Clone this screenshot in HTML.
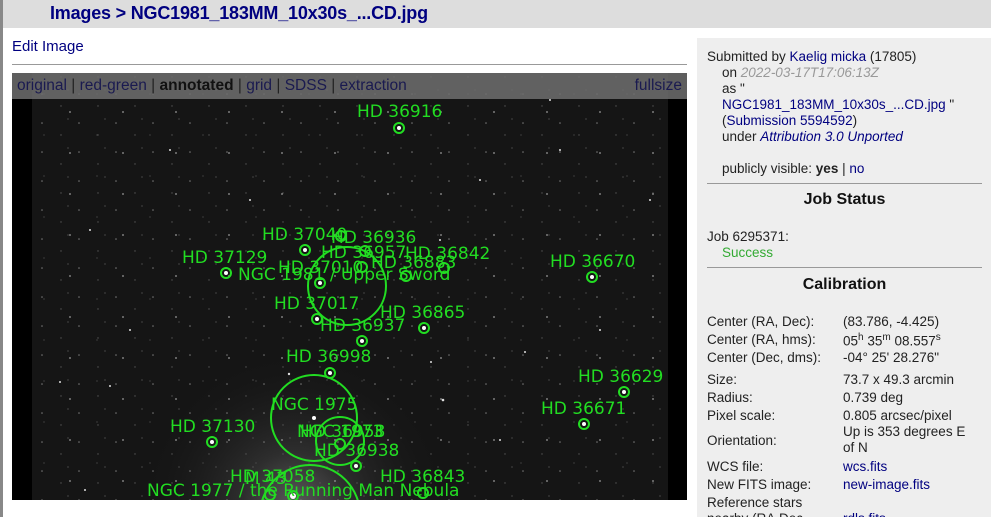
<!DOCTYPE html>
<html><head><meta charset="utf-8"><style>
body{margin:0;width:991px;height:517px;overflow:hidden;background:#fff;font-family:"Liberation Sans",Arial,sans-serif;position:relative}
.lb{position:absolute;left:0;top:0;width:3px;height:517px;background:#888}
.hdr{position:absolute;left:3px;top:0;width:988px;height:28px;background:#ddd}
.hdr span{position:absolute;left:47px;top:3px;font-size:18px;font-weight:bold;color:#000080;letter-spacing:-0.2px}
.edit{position:absolute;left:12px;top:38px;font-size:15px;color:#000080}
.hr{position:absolute;left:12px;top:64px;width:675px;height:1px;background:#999}
.img{position:absolute;left:12px;top:73px;width:675px;height:427px;background:#000;overflow:hidden}
.tb{position:absolute;left:12px;top:73px;width:675px;height:26px;background:rgba(110,110,110,0.85);font-size:15.5px;color:#1a1a50;line-height:26px}
.tb .l{position:absolute;left:5px}
.tb .r{position:absolute;right:5px}
.tb b{color:#111}
.tb i{font-style:normal;color:#222}
.panel{position:absolute;left:697px;top:38px;width:294px;height:479px;background:#eee;font-size:13.5px;color:#222;overflow:hidden}
.panel a{color:#000080}
.t{position:absolute;white-space:nowrap}
.ph{position:absolute;left:10px;width:275px;height:1px;background:#999}
.h{position:absolute;left:10px;width:275px;text-align:center;font-weight:bold;font-size:16px;color:#111}
</style></head><body>
<div class="lb"></div>
<div class="hdr"><span>Images &gt; NGC1981_183MM_10x30s_...CD.jpg</span></div>
<div class="edit">Edit Image</div>
<div class="hr"></div>
<div class="img">
<svg width="675" height="427" viewBox="12 73 675 427" xmlns="http://www.w3.org/2000/svg">
<defs>
<radialGradient id="g1" cx="295" cy="505" r="150" gradientUnits="userSpaceOnUse"><stop offset="0" stop-color="#5a5a5a"/><stop offset="0.35" stop-color="#2e2e2e"/><stop offset="1" stop-color="#181818" stop-opacity="0"/></radialGradient>
<pattern id="st" width="37" height="29" patternUnits="userSpaceOnUse"><circle cx="5" cy="7" r="0.8" fill="#777"/><circle cx="24" cy="19" r="0.7" fill="#555"/><circle cx="31" cy="3" r="0.6" fill="#666"/></pattern>
<pattern id="st2" width="53" height="41" patternUnits="userSpaceOnUse"><circle cx="17" cy="30" r="0.9" fill="#999"/><circle cx="44" cy="12" r="0.6" fill="#555"/></pattern>
</defs>
<rect x="32" y="73" width="636" height="427" fill="#151515"/>
<rect x="32" y="73" width="636" height="427" fill="url(#g1)"/>
<rect x="32" y="73" width="636" height="427" fill="url(#st)"/>
<rect x="32" y="73" width="636" height="427" fill="url(#st2)"/>
<g fill="#ddd">
<circle cx="60" cy="382" r="1"/><circle cx="110" cy="386" r="1"/><circle cx="170" cy="150" r="1"/><circle cx="480" cy="180" r="1"/><circle cx="560" cy="150" r="1"/><circle cx="600" cy="330" r="1"/><circle cx="431" cy="362" r="1"/><circle cx="90" cy="230" r="1"/><circle cx="250" cy="200" r="1"/><circle cx="650" cy="200" r="1"/><circle cx="525" cy="352" r="1"/><circle cx="440" cy="240" r="1"/><circle cx="130" cy="330" r="1"/><circle cx="500" cy="440" r="1"/><circle cx="85" cy="490" r="1"/><circle cx="443" cy="400" r="1.3"/><circle cx="289" cy="374" r="1.2"/><circle cx="550" cy="100" r="1"/>
</g>
<g fill="#fff">
<circle cx="399" cy="128" r="2"/><circle cx="305" cy="250" r="2"/><circle cx="226" cy="273" r="2"/><circle cx="320" cy="283" r="2"/><circle cx="592" cy="277" r="2"/><circle cx="317" cy="319" r="2"/><circle cx="424" cy="328" r="2"/><circle cx="362" cy="341" r="2"/><circle cx="330" cy="373" r="2"/><circle cx="624" cy="392" r="2"/><circle cx="584" cy="424" r="2"/><circle cx="212" cy="442" r="2"/><circle cx="356" cy="466" r="2"/><circle cx="293" cy="496" r="3"/><circle cx="314" cy="418" r="2"/>
</g>
<g fill="none" stroke="#22dd22" stroke-width="2">
<circle cx="399" cy="128" r="5"/><circle cx="305" cy="250" r="5"/><circle cx="341" cy="236" r="5"/><circle cx="365" cy="251" r="5"/><circle cx="444" cy="268" r="5"/><circle cx="226" cy="273" r="5"/><circle cx="362" cy="267" r="5"/><circle cx="406" cy="276" r="5"/><circle cx="320" cy="283" r="5"/><circle cx="347" cy="286" r="39"/><circle cx="592" cy="277" r="5"/><circle cx="317" cy="319" r="5"/><circle cx="424" cy="328" r="5"/><circle cx="362" cy="341" r="5"/><circle cx="330" cy="373" r="5"/><circle cx="624" cy="392" r="5"/><circle cx="584" cy="424" r="5"/><circle cx="314" cy="418" r="43"/><circle cx="340" cy="441" r="24"/><circle cx="212" cy="442" r="5"/><circle cx="340" cy="444" r="5"/><circle cx="356" cy="466" r="5"/><circle cx="310" cy="515" r="50"/><circle cx="270" cy="495" r="5"/><circle cx="423" cy="493" r="5"/><circle cx="293" cy="496" r="5"/>
</g>
<g fill="#22dd22" font-family="DejaVu Sans, sans-serif" font-size="17">
<text x="357" y="117">HD 36916</text>
<text x="262" y="240">HD 37040</text>
<text x="331" y="243">HD 36936</text>
<text x="321" y="258">HD 36957</text>
<text x="405" y="259">HD 36842</text>
<text x="182" y="263">HD 37129</text>
<text x="278" y="273">HD 37010</text>
<text x="371" y="268">HD 36883</text>
<text x="238" y="280">NGC 1981 / Upper Sword</text>
<text x="550" y="267">HD 36670</text>
<text x="274" y="309">HD 37017</text>
<text x="380" y="318">HD 36865</text>
<text x="320" y="331">HD 36937</text>
<text x="286" y="362">HD 36998</text>
<text x="578" y="382">HD 36629</text>
<text x="541" y="414">HD 36671</text>
<text x="271" y="410">NGC 1975</text>
<text x="297" y="437">NGC 1973</text>
<text x="300" y="437">HD 36958</text>
<text x="170" y="432">HD 37130</text>
<text x="314" y="456">HD 36938</text>
<text x="230" y="482">HD 37058</text>
<text x="245" y="484">M 43</text>
<text x="380" y="482">HD 36843</text>
<text x="147" y="496">NGC 1977 / the Running Man Nebula</text>
</g>
</svg>
</div>
<div class="tb"><span class="l">original <i>|</i> red-green <i>|</i> <b>annotated</b> <i>|</i> grid <i>|</i> SDSS <i>|</i> extraction</span><span class="r">fullsize</span></div>
<div class="panel">
<div class="t" style="left:10px;top:11px">Submitted by <a>Kaelig micka</a> (17805)</div>
<div class="t" style="left:25px;top:27px">on <i style="color:#999">2022-03-17T17:06:13Z</i></div>
<div class="t" style="left:25px;top:43px">as "</div>
<div class="t" style="left:25px;top:59px"><a>NGC1981_183MM_10x30s_...CD.jpg</a> "</div>
<div class="t" style="left:25px;top:75px">(<a>Submission 5594592</a>)</div>
<div class="t" style="left:25px;top:91px">under <a><i>Attribution 3.0 Unported</i></a></div>
<div class="t" style="left:25px;top:123px">publicly visible: <b>yes</b> | <a>no</a></div>
<div class="ph" style="top:145px"></div>
<div class="h" style="top:153px">Job Status</div>
<div class="t" style="left:10px;top:191px">Job 6295371:</div>
<div class="t" style="left:25px;top:207px;color:#33aa33">Success</div>
<div class="ph" style="top:229px"></div>
<div class="h" style="top:238px">Calibration</div>
<div class="t" style="left:10px;top:276px">Center (RA, Dec):</div><div class="t" style="left:146px;top:276px">(83.786, -4.425)</div>
<div class="t" style="left:10px;top:294px">Center (RA, hms):</div><div class="t" style="left:146px;top:294px">05<sup style="font-size:10px">h</sup> 35<sup style="font-size:10px">m</sup> 08.557<sup style="font-size:10px">s</sup></div>
<div class="t" style="left:10px;top:312px">Center (Dec, dms):</div><div class="t" style="left:146px;top:312px">-04° 25' 28.276"</div>
<div class="t" style="left:10px;top:334px">Size:</div><div class="t" style="left:146px;top:334px">73.7 x 49.3 arcmin</div>
<div class="t" style="left:10px;top:352px">Radius:</div><div class="t" style="left:146px;top:352px">0.739 deg</div>
<div class="t" style="left:10px;top:370px">Pixel scale:</div><div class="t" style="left:146px;top:370px">0.805 arcsec/pixel</div>
<div class="t" style="left:10px;top:395px">Orientation:</div><div class="t" style="left:146px;top:386px;line-height:16px">Up is 353 degrees E<br>of N</div>
<div class="t" style="left:10px;top:421px">WCS file:</div><div class="t" style="left:146px;top:421px"><a>wcs.fits</a></div>
<div class="t" style="left:10px;top:439px">New FITS image:</div><div class="t" style="left:146px;top:439px"><a>new-image.fits</a></div>
<div class="t" style="left:10px;top:457px;line-height:16px">Reference stars<br>nearby (RA,Dec</div><div class="t" style="left:146px;top:473px"><a>rdls.fits</a></div>
</div>
</body></html>
